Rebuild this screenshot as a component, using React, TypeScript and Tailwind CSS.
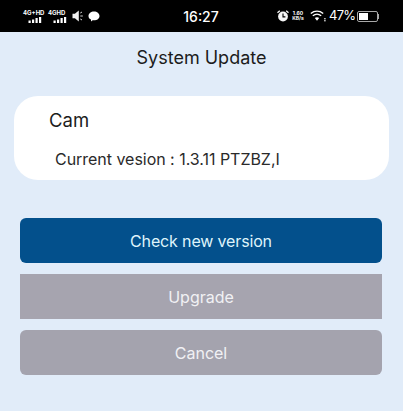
import type { ReactNode } from "react";

function SignalBars() {
  return (
    <svg width="14" height="6" viewBox="0 0 14 6" className="block">
      <rect x="0.5" y="3.500" width="2.200" height="2.500" fill="#fff" />
      <rect x="4" y="2.500" width="2.200" height="3.500" fill="#fff" />
      <rect x="7.500" y="1" width="2.200" height="5" fill="#fff" />
      <rect x="11" y="0" width="2.200" height="6" fill="#fff" />
    </svg>
  );
}

function Network({ label, width }: { label: string; width: string }) {
  return (
    <div className={`flex flex-col ${width}`}>
      <span className="text-[6px] leading-[7px] font-bold whitespace-nowrap text-white">{label}</span>
      <div className="mt-px ml-[5px]">
        <SignalBars />
      </div>
    </div>
  );
}

function Speaker() {
  return (
    <svg width="12" height="12" viewBox="0 0 12 12">
      <path d="M0.5 3.800h2.400L6.800 .5v11L2.900 8.200H0.5z" fill="#f0f0f0" />
      <path d="M8.300 3l1.700-1M8.300 6h2.500M8.300 9l1.700 1" stroke="#d8d8d8" strokeWidth="1" />
    </svg>
  );
}

function Message() {
  return (
    <svg width="12" height="11" viewBox="0 0 12 11">
      <path d="M6 0.5c3 0 5.500 1.900 5.500 4.400S9 9.300 6 9.300c-.5 0-1 0-1.400-.1L3 10.500V8.600C1.500 7.800.5 6.500.5 4.900.5 2.400 3 .5 6 .5z" fill="#fff" />
    </svg>
  );
}

function Alarm() {
  return (
    <svg width="12" height="12" viewBox="0 0 12 12">
      <circle cx="6" cy="6.500" r="4.900" fill="#f5f5f5" />
      <path d="M6 3.600V6.900H8.400" stroke="#000" strokeWidth="1.100" fill="none" />
      <path d="M0.500 2.800L2.800 .8M11.500 2.800L9.200 .8" stroke="#f5f5f5" strokeWidth="1.400" />
    </svg>
  );
}

function Wifi() {
  return (
    <svg width="16" height="12" viewBox="0 0 16 12">
      <path d="M0.800 3.500C4.500 .4 9.500 .4 13.200 3.500" stroke="#fff" strokeWidth="1.400" fill="none" />
      <path d="M2.800 5.800C5.300 3.800 8.700 3.800 11.200 5.800" stroke="#fff" strokeWidth="1.400" fill="none" />
      <path d="M4.800 8C6 7 8 7 9.200 8L7 10.800z" fill="#fff" />
      <rect x="14.200" y="8" width="1.400" height="1.400" fill="#ddd" />
      <rect x="14.200" y="10" width="1.400" height="1.400" fill="#ddd" />
    </svg>
  );
}

function Battery() {
  return (
    <div className="flex items-center">
      <div className="h-[11px] w-[21px] rounded-[2px] border border-[#a8a8a8] p-px">
        <div className="h-full w-[9px] bg-white" />
      </div>
      <div className="h-[5px] w-[1px] bg-[#a8a8a8]" />
    </div>
  );
}

function StatusBar() {
  return (
    <div className="grid h-[32px] grid-cols-[1fr_auto_1fr] items-center bg-black pr-[24px] pl-[23px] text-white">
      <div className="flex items-center">
        <Network label="4G+HD" width="w-[25px]" />
        <Network label="4GHD" width="w-[24px]" />
        <Speaker />
        <div className="ml-[4px]">
          <Message />
        </div>
      </div>
      <span className="text-[14px] font-medium">16:27</span>
      <div className="flex items-center justify-end">
        <Alarm />
        <div className="ml-[2px] flex w-[14px] flex-col items-center text-[5px] leading-[5.500px] font-bold">
          <span>1.60</span>
          <span>KB/s</span>
        </div>
        <div className="ml-[5px]">
          <Wifi />
        </div>
        <span className="ml-[3px] w-[23px] text-[13px] tracking-[-0.7px] whitespace-nowrap">47%</span>
        <div className="ml-[5px]">
          <Battery />
        </div>
      </div>
    </div>
  );
}

function ActionButton({ children, className }: { children: ReactNode; className: string }) {
  return (
    <div className={`flex h-[45px] items-center justify-center text-[16px] ${className}`}>
      {children}
    </div>
  );
}

export default function App() {
  return (
    <div className="h-[411px] w-[403px] overflow-hidden bg-[#e1ecf9] font-['Inter','Liberation_Sans',sans-serif]">
      <StatusBar />
      <h1 className="mt-[15px] text-center text-[18px] leading-[22px] font-normal text-[#1c1c1c]">
        System Update
      </h1>
      <div className="mx-[14px] mt-[27px] h-[84px] rounded-[24px] bg-white pt-[13px]">
        <p className="ml-[35px] text-[18.500px] leading-[22px] text-[#1c1c1c]">Cam</p>
        <p className="mt-[19px] ml-[41px] text-[16px] leading-[18px] tracking-[-0.03px] text-[#2a2a2a]">
          Current vesion : 1.3.11 PTZBZ,I
        </p>
      </div>
      <div className="mt-[38px] mr-[21px] ml-[20px] flex flex-col gap-[11px]">
        <ActionButton className="rounded-[6px] bg-[#03508c] tracking-[-0.15px] text-[#dff4fb]">
          Check new version
        </ActionButton>
        <ActionButton className="bg-[#a6a4af] text-[#f1f1f4]">Upgrade</ActionButton>
        <ActionButton className="rounded-[6px] bg-[#a4a3ae] text-[#f1f1f4]">Cancel</ActionButton>
      </div>
    </div>
  );
}
